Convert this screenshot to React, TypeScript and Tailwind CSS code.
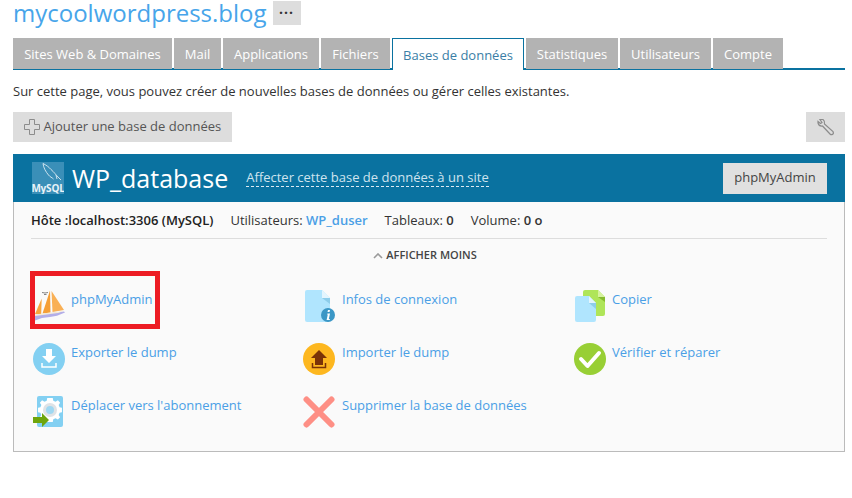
import type { ReactNode } from "react";

const tabs = [
  { label: "Sites Web & Domaines", w: "w-[159px]" },
  { label: "Mail", w: "w-[47px]" },
  { label: "Applications", w: "w-[96px]" },
  { label: "Fichiers", w: "w-[69px]" },
  { label: "Bases de données", w: "w-[132px]", active: true },
  { label: "Statistiques", w: "w-[92px]" },
  { label: "Utilisateurs", w: "w-[91px]" },
  { label: "Compte", w: "w-[70px]" },
];

const BoatIcon = () => (
  <svg width="32" height="32" viewBox="0 0 32 32">
    <path d="M1 25 L7.7 9.5 L7.2 25 Z" fill="#f8a63f" />
    <path d="M8.5 24.5 L16 1.5 L16.5 23.5 Z" fill="#f59f36" />
    <path d="M17.5 2 L30 21 L18.5 23 Z" fill="#f9b055" />
    <path d="M1 26 L30 22.5 L31 23.5 L23 26.8 L16 28 L8 29 L1 31.5 Z" fill="#b3aee8" />
    <path d="M1 25.6 L30 22 L24 24 L1 27 Z" fill="#f4ead6" />
    <path d="M8 3.5 L11 4 L14 3.5 M10 5.5 L12.5 5.5" fill="none" stroke="#666" strokeWidth="0.8" />
  </svg>
);

const InfoIcon = () => (
  <svg width="32" height="32" viewBox="0 0 32 32">
    <path d="M3 0 H18 L26 8 V30 Q26 32 24 32 H3 Q1 32 1 30 V2 Q1 0 3 0 Z" fill="#b0e5fe" />
    <path d="M18 0 L26 8 H18 Z" fill="#e3f5fe" />
    <path d="M18 8 H26 V14 Z" fill="#8dcdea" />
    <circle cx="24" cy="25" r="7" fill="#3b97c6" />
    <path d="M24 20 H26 L25.5 22 H23.5 Z M23.5 23.5 H26 L24.8 29 H26 L25.6 30 H22.6 L23.8 24.5 H23 Z" fill="#fff" />
  </svg>
);

const CopyIcon = () => (
  <svg width="32" height="32" viewBox="0 0 32 32">
    <path d="M11 0 H24 L31 7 V24 Q31 26 29 26 H11 Q9 26 9 24 V2 Q9 0 11 0 Z" fill="#afe559" />
    <path d="M24 0 L31 7 H24 Z" fill="#d5f29d" />
    <path d="M24 7 H31 V12 Z" fill="#86bb2e" />
    <path d="M3 6 H15 L22 13 V30 Q22 32 20 32 H3 Q1 32 1 30 V8 Q1 6 3 6 Z" fill="#b0e5fe" />
    <path d="M15 6 L22 13 H15 Z" fill="#e3f5fe" />
    <path d="M15 13 H22 V19 Z" fill="#8dcdea" />
  </svg>
);

const ExportIcon = () => (
  <svg width="32" height="32" viewBox="0 0 32 32">
    <circle cx="16" cy="16" r="16" fill="#83d0f2" />
    <path d="M13 6 H19 V13 H23 L16 20 L9 13 H13 Z" fill="#fff" />
    <path d="M9 20 V24 H23 V20" fill="none" stroke="#fff" strokeWidth="1.5" />
  </svg>
);

const ImportIcon = () => (
  <svg width="32" height="32" viewBox="0 0 32 32">
    <circle cx="16" cy="16" r="16" fill="#fdb71f" />
    <path d="M16 7 L24 15 H20 V22 H12 V15 H8 Z" fill="#7a3308" />
    <path d="M9.5 20 V24.5 H22.5 V20" fill="none" stroke="#7a3308" strokeWidth="1.5" />
  </svg>
);

const CheckIcon = () => (
  <svg width="32" height="32" viewBox="0 0 32 32">
    <circle cx="16" cy="16" r="16" fill="#98cf35" />
    <path d="M7 16 L13.5 23 L25 10" fill="none" stroke="#fff" strokeWidth="4" strokeLinecap="round" strokeLinejoin="round" />
  </svg>
);

const MoveIcon = () => (
  <svg width="32" height="33" viewBox="0 0 32 33">
    <rect x="4" y="0" width="26" height="31" rx="2" fill="#83d0f2" />
    <g transform="translate(17 14) scale(0.92) translate(-17 -17)">
      <path
        d="M14 4 H20 L20.6 7 L23 8 L25.6 6.4 L28 9 L26.4 11.6 L27.4 14 L30 14.6 V19.4 L27.4 20 L26.4 22.4 L28 25 L25.6 27.4 L23 26 L20.6 27 L20 30 H14 L13.4 27 L11 26 L8.4 27.4 L6 25 L7.6 22.4 L6.6 20 L4 19.4 V14.6 L6.6 14 L7.6 11.6 L6 9 L8.4 6.4 L11 8 L13.4 7 Z"
        fill="#fff"
      />
    </g>
    <circle cx="17" cy="14" r="7" fill="#dfe3e6" />
    <circle cx="17" cy="14" r="4" fill="#9fd8f2" />
    <path d="M0 21 H9 V17 L16 24 L9 31 V27 H0 Z" fill="#6ea50c" />
  </svg>
);

const DeleteIcon = () => (
  <svg width="32" height="32" viewBox="0 0 32 32">
    <path d="M3.5 3.5 L28.5 28.5 M28.5 3.5 L3.5 28.5" stroke="#fe8f85" strokeWidth="6" strokeLinecap="round" />
  </svg>
);

const MysqlIcon = () => (
  <div className="relative w-8 h-8 bg-[#3a8fb8] shrink-0 flex flex-col items-center justify-end overflow-hidden">
    <svg width="32" height="22" viewBox="0 0 32 22" className="absolute top-0 left-0">
      <path
        d="M11 1.5 C14 3 17 5 19 7.5 C22 10 24 13 26 15 L29 18 M11 1.5 C11.5 6 14 10 16.5 13 C18 15 20 15.5 21.5 17 M24 13 L25 17"
        fill="none"
        stroke="#dcecf4"
        strokeWidth="0.9"
      />
    </svg>
    <span className="text-[10px] leading-[12px] font-bold text-[#e8f3f8] tracking-[-0.2px]">MySQL</span>
  </div>
);

function Action({ icon, label, box }: { icon: ReactNode; label: string; box: string }) {
  return (
    <div className="flex h-[53px]">
      <div className={`${box} shrink-0`}>{icon}</div>
      <a className="text-[13px] leading-[18px] text-[#4a9fe6]">{label}</a>
    </div>
  );
}

export default function App() {
  return (
    <div className="relative w-[852px] h-[498px] overflow-hidden bg-white pl-[13px] pr-[7px] text-[#333] font-['Open_Sans',sans-serif]">
      <div className="flex items-center gap-[6px] h-[26px]">
        <h1 className="text-[24px] leading-[26px] text-[#47a5ea] font-normal">mycoolwordpress.blog</h1>
        <button className="w-[28px] h-[24px] bg-[#ddd] text-[#333] text-[14px] font-bold leading-[20px] tracking-[1px]">···</button>
      </div>

      {/* Tabs */}
      <div className="flex gap-[2px] mt-[12px] h-[32px] border-b-2 border-[#0a72a0]">
        {tabs.map((t) =>
          t.active ? (
            <div
              key={t.label}
              className={`${t.w} h-[32px] bg-white border-t border-x border-[#0a72a0] text-[#3a7ea6] text-[13px] leading-[32px] text-center`}
            >
              {t.label}
            </div>
          ) : (
            <div key={t.label} className={`${t.w} h-[31px] bg-[#b3b3b3] text-white text-[13px] leading-[33px] text-center`}>
              {t.label}
            </div>
          )
        )}
      </div>

      <p className="text-[13px] leading-[18px] mt-[12px] text-[#333]">
        Sur cette page, vous pouvez créer de nouvelles bases de données ou gérer celles existantes.
      </p>

      {/* Toolbar */}
      <div className="flex justify-between mt-[12px]">
        <button className="flex items-center gap-[4px] w-[219px] h-[30px] bg-[#ddd] pl-[11px] text-[13px] text-[#555]">
          <svg width="16" height="16" viewBox="0 0 16 16">
            <path d="M5.5 0.5 H10.5 V5.5 H15.5 V10.5 H10.5 V15.5 H5.5 V10.5 H0.5 V5.5 H5.5 Z" fill="none" stroke="#8c8c8c" />
          </svg>
          <span className="-ml-[0.5px]">Ajouter une base de données</span>
        </button>
        <button className="flex items-center justify-center w-[39px] h-[30px] bg-[#ddd]">
          <svg width="18" height="18" viewBox="0 0 18 18">
            <path
              d="M3 1.5 L6 1.5 Q8 3 7.5 6 L16 13.5 Q17 15.5 15.5 16.5 Q14 17 13 16 L5.5 8 Q2 8.5 1 5 L1 3.5 L3.5 5.5 L5 4.5 Z"
              fill="none"
              stroke="#8c8c8c"
              strokeWidth="1.2"
            />
          </svg>
        </button>
      </div>

      {/* Database card */}
      <div className="mt-[12px] border border-[#bbb] border-t-0 bg-[#fafafa] h-[298px] w-[832px]">
        <div className="flex items-center h-[48px] bg-[#0a72a0] -mx-px pl-[19px] pr-[18px]">
          <MysqlIcon />
          <span className="ml-[8px] text-[25px] leading-[32px] text-white">WP_database</span>
          <a className="ml-[18px] text-[13px] leading-[17px] text-[#cfe4ef] border-b border-dashed border-[#dceaf2]">
            Affecter cette base de données à un site
          </a>
          <button className="ml-auto w-[104px] h-[31px] bg-[#e0e0e0] text-[13px] text-[#444]">phpMyAdmin</button>
        </div>

        <div className="mx-[17px]">
          <div className="flex h-[37px] items-end pb-[9px] border-b border-[#ddd] text-[13px] leading-[18px]">
            <div className="flex h-[18px] text-[#222]">
              <span className="font-semibold">Hôte :localhost:3306 (MySQL)</span>
              <span className="ml-[17px] text-[#333]">
                Utilisateurs: <a className="font-semibold text-[#4a9fe6]">WP_duser</a>
              </span>
              <span className="ml-[17px] text-[#333]">
                Tableaux: <b className="font-semibold">0</b>
              </span>
              <span className="ml-[17px] text-[#333]">
                Volume: <b className="font-semibold">0 o</b>
              </span>
            </div>
          </div>

          <div className="flex items-center justify-center gap-[3px] h-[31px] pt-[2px] pr-[8px] text-[11px] font-semibold text-[#444]">
            <svg width="10" height="6" viewBox="0 0 10 6">
              <path d="M1 5 L5 1 L9 5" fill="none" stroke="#9a9a9a" strokeWidth="1.6" />
            </svg>
            AFFICHER MOINS
          </div>

          <div className="grid grid-cols-[271px_270px_1fr] mt-[20px]">
            <Action icon={<div className="-mt-[1px] ml-[3px]"><BoatIcon /></div>} label="phpMyAdmin" box="w-10" />
            <Action icon={<div className="ml-[2px]"><InfoIcon /></div>} label="Infos de connexion" box="w-10" />
            <Action icon={<div className="ml-[2px]"><CopyIcon /></div>} label="Copier" box="w-10" />

            <Action icon={<div className="ml-[2px]"><ExportIcon /></div>} label="Exporter le dump" box="w-10" />
            <Action icon={<div className="ml-[1px]"><ImportIcon /></div>} label="Importer le dump" box="w-10" />
            <Action icon={<div className="ml-[2px]"><CheckIcon /></div>} label="Vérifier et réparer" box="w-10" />

            <Action icon={<div className="ml-[2px]"><MoveIcon /></div>} label="Déplacer vers l'abonnement" box="w-10" />
            <Action icon={<div className="ml-[1px]"><DeleteIcon /></div>} label="Supprimer la base de données" box="w-10" />
          </div>
        </div>
      </div>

      {/* Red highlight drawn over the screenshot */}
      <div className="absolute left-[30px] top-[271px] w-[130px] h-[58px] border-[5px] border-[#ed1c24]" />
    </div>
  );
}
